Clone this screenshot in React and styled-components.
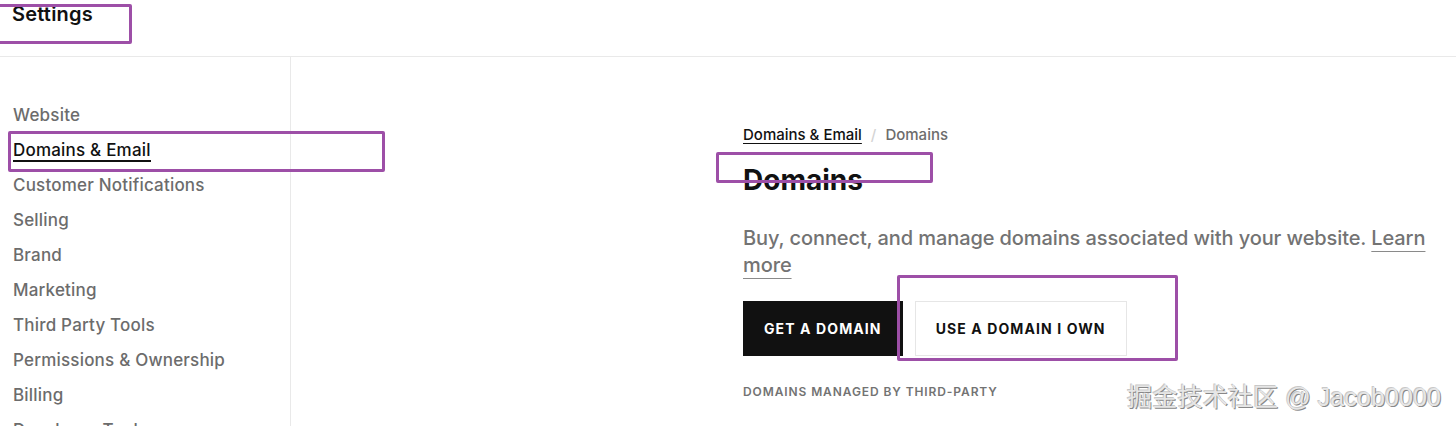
import styled, { createGlobalStyle } from "styled-components";

const GlobalStyle = createGlobalStyle`
  html, body {
    margin: 0;
    padding: 0;
    background: #fff;
  }
  body {
    font-family: Inter, "Liberation Sans", "Noto Sans CJK SC", sans-serif;
    overflow: hidden;
  }
`;

const navItems = [
  "Website",
  "Domains & Email",
  "Customer Notifications",
  "Selling",
  "Brand",
  "Marketing",
  "Third Party Tools",
  "Permissions & Ownership",
  "Billing",
  "Developer Tools",
];

const App = () => {
  return (
    <Page>
      <GlobalStyle />
      <Header>
        <Title>Settings</Title>
      </Header>
      <Body>
        <Sidebar>
          {navItems.map((item) => (
            <NavItem key={item} $active={item === "Domains & Email"}>
              {item}
            </NavItem>
          ))}
        </Sidebar>
        <Main>
          <Crumbs>
            <CrumbLink>Domains &amp; Email</CrumbLink>
            <Slash>/</Slash>
            <CrumbCurrent>Domains</CrumbCurrent>
          </Crumbs>
          <Heading>Domains</Heading>
          <Lead>
            Buy, connect, and manage domains associated with your website.{" "}
            <LeadLink>Learn more</LeadLink>
          </Lead>
          <Actions>
            <Button $primary>GET A DOMAIN</Button>
            <Button>USE A DOMAIN I OWN</Button>
          </Actions>
          <SectionLabel>DOMAINS MANAGED BY THIRD-PARTY</SectionLabel>
        </Main>
      </Body>
      <Mark $x={-4} $y={4} $w={136} $h={40} />
      <Mark $x={8} $y={131} $w={377} $h={41} />
      <Mark $x={716} $y={152} $w={217} $h={31} />
      <Mark $x={897} $y={275} $w={281} $h={86} />
      <Watermark>掘金技术社区 @ Jacob0000</Watermark>
    </Page>
  );
};

export default App;

const Page = styled.div`
  position: relative;
  width: 1456px;
  height: 426px;
  overflow: hidden;
`;

const Header = styled.header`
  height: 57px;
  border-bottom: 1px solid #e9e9e9;
  box-sizing: border-box;
  padding: 0 12px;
`;

const Title = styled.h1`
  margin: 0;
  font-size: 20px;
  line-height: 28px;
  font-weight: 600;
  letter-spacing: 0.2px;
  color: #111;
`;

const Body = styled.div`
  display: flex;
  height: 369px;
`;

const Sidebar = styled.nav`
  width: 291px;
  flex-shrink: 0;
  border-right: 1px solid #e9e9e9;
  display: flex;
  flex-direction: column;
  gap: 11px;
  padding: 46px 0 0 13px;
  box-sizing: border-box;
`;

const NavItem = styled.div`
  align-self: flex-start;
  font-size: 17px;
  line-height: 24px;
  font-weight: 500;
  letter-spacing: 0.2px;
  color: ${(p) => (p.$active ? "#111" : "#6c6c6c")};
  box-shadow: ${(p) => (p.$active ? "inset 0 -2px 0 #111" : "none")};
`;

const Main = styled.main`
  flex: 1;
  padding: 68px 0 0 452px;
  box-sizing: border-box;
`;

const Crumbs = styled.div`
  display: flex;
  align-items: center;
  gap: 9px;
  font-size: 15px;
  line-height: 20px;
  font-weight: 500;
`;

const CrumbLink = styled.span`
  color: #111;
  text-decoration: underline;
  text-underline-offset: 3px;
`;

const Slash = styled.span`
  color: #d4d4d4;
`;

const CrumbCurrent = styled.span`
  color: #6c6c6c;
`;

const Heading = styled.h2`
  margin: 18px 0 0;
  font-size: 28px;
  line-height: 34px;
  font-weight: 700;
  color: #111;
`;

const Lead = styled.p`
  margin: 28px 0 0;
  width: 690px;
  font-size: 20px;
  line-height: 27px;
  font-weight: 500;
  letter-spacing: -0.1px;
  color: #737373;
`;

const LeadLink = styled.span`
  text-decoration: underline;
  text-decoration-color: #8a8a8a;
  text-decoration-thickness: 1px;
  text-underline-offset: 6px;
`;

const Actions = styled.div`
  display: flex;
  gap: 12px;
  margin-top: 22px;
`;

const Button = styled.button`
  height: 55px;
  padding: 0 20px;
  border: 1px solid ${(p) => (p.$primary ? "#111" : "#e6e6e6")};
  background: ${(p) => (p.$primary ? "#111" : "#fff")};
  color: ${(p) => (p.$primary ? "#fff" : "#111")};
  font-family: Inter, "Liberation Sans", sans-serif;
  font-size: 14px;
  font-weight: 700;
  letter-spacing: 1.1px;
`;

const SectionLabel = styled.div`
  margin-top: 28px;
  font-size: 12px;
  line-height: 16px;
  font-weight: 600;
  letter-spacing: 0.9px;
  color: #737373;
`;

const Mark = styled.div`
  position: absolute;
  left: ${(p) => p.$x}px;
  top: ${(p) => p.$y}px;
  width: ${(p) => p.$w}px;
  height: ${(p) => p.$h}px;
  border: 3px solid #9d4fa7;
  border-radius: 2px;
  box-sizing: border-box;
  pointer-events: none;
`;

const Watermark = styled.div`
  position: absolute;
  right: 15px;
  bottom: 13px;
  font-family: "Liberation Sans", "Noto Sans CJK SC", sans-serif;
  font-size: 25.2px;
  color: #e6e6e6;
  text-shadow: 1px 1px 0 #888, -1px -1px 0 #c8c8c8;
`;
